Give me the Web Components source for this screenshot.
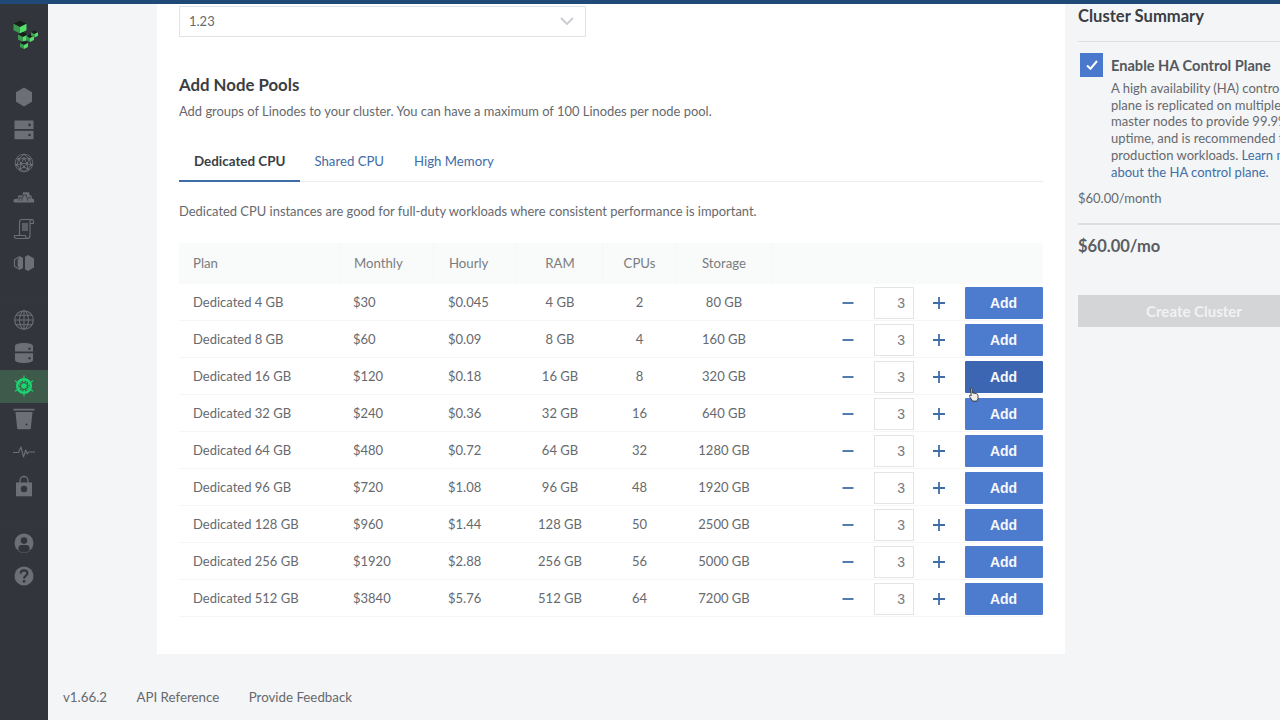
<!DOCTYPE html>
<html lang="en">
<head>
<meta charset="utf-8">
<title>Create Cluster</title>
<style>
  html, body { margin: 0; height: 720px; overflow: hidden; }
  body { background: #f4f5f6; font-family: Lato, "Liberation Sans", sans-serif; color: #66696e; }
</style>
</head>
<body>
<app-shell>
  <app-sidebar slot="side"></app-sidebar>
  <pool-card slot="card"></pool-card>
  <cluster-summary slot="summary"></cluster-summary>
  <app-footer slot="footer"></app-footer>
</app-shell>
<script>
// sidebar icons, all on a 24 box
const ICONS = {
  linodes: '<path fill="currentColor" d="M12 2.500l8 4.700v9.600l-8 4.700-8-4.700V7.200z"/>',
  volumes: '<path fill="currentColor" fill-rule="evenodd" d="M2.500 2.500h19v8.600h-19zM2.500 12.700h19v8.600h-19zM17.500 5.600a1.300 1.300 0 1 0 0 2.600 1.300 1.300 0 0 0 0-2.600zM17.500 15.700a1.300 1.300 0 1 0 0 2.600 1.300 1.300 0 0 0 0-2.600z"/>',
  network: '<g fill="none" stroke="currentColor" stroke-width=".9"><circle cx="12" cy="12" r="8.800"/><path d="M12 3.400L6.500 8 12 7.500 17.500 8zM6.500 8L5 14l4-1.500zM17.500 8L19 14l-4-1.500zM12 7.500L9 12.500h6zM9 12.500L8 18l4 2.600 4-2.600-1-5.500M5 14l3 4M19 14l-3 4M8 18l4-2 4 2M9 12.500l3 3.500 3-3.500"/></g><g fill="currentColor"><circle cx="12" cy="7.500" r="1.300"/><circle cx="9" cy="12.500" r="1.300"/><circle cx="15" cy="12.500" r="1.300"/><circle cx="12" cy="16" r="1.300"/><circle cx="6.500" cy="8" r="1.300"/><circle cx="17.500" cy="8" r="1.300"/><circle cx="5" cy="14" r="1.300"/><circle cx="19" cy="14" r="1.300"/><circle cx="8" cy="18" r="1.300"/><circle cx="16" cy="18" r="1.300"/></g>',
  images: '<path fill="currentColor" d="M2.500 18.500c-1.400-.6-1.400-3 .3-3.400l3-.3.5-3.300h4.200l.5-3.200h6l.8 3.200h1.400l1 3.100 1.900 1v2.900z"/><path fill="none" stroke="#32363c" stroke-width=".8" d="M7 16.800v-3h3v3M11 13.800V11h3.400v2.800M15.600 16.800v-3H19"/>',
  script: '<path fill="none" stroke="currentColor" stroke-width="1.100" stroke-linejoin="round" d="M7.500 18.500V5c0-1.500 1-2.500 2.500-2.500h10c-1.200 0-2 1-2 2.300v13.700c0 1.600-1 3-2.700 3H4.500c-1.500 0-2.400-1.300-2.200-3h11.200c0 1.300.5 2.200 1.600 3M18 6.500h3.500V5c0-1.500-.6-2.500-1.500-2.500"/><path fill="currentColor" d="M10 6h6v8h-6z" opacity=".7"/>',
  balancer: '<path fill="none" stroke="currentColor" stroke-width="1.200" d="M8 5.500L2.500 8.500v7L8 18.500"/><path fill="currentColor" d="M16 4l6 3.400v9.200L16 20l-3-1.700V5.700zM11 6.900v10.200L8 18.800 5.600 15V9L8 5.200z"/>',
  domains: '<g fill="none" stroke="currentColor" stroke-width="1.100"><circle cx="12" cy="12" r="9.300"/><ellipse cx="12" cy="12" rx="4.400" ry="9.300"/><path d="M12 2.700v18.600M2.700 12h18.600M4 7.300h16M4 16.700h16"/></g>',
  databases: '<path fill="currentColor" fill-rule="evenodd" d="M3 5c0-1.900 4-3 9-3s9 1.100 9 3v5.600H3zM3 12.200h18V19c0 1.900-4 3-9 3s-9-1.100-9-3zM17.500 6.600a1.200 1.200 0 1 0 0 2.400 1.200 1.200 0 0 0 0-2.400zM17.500 16a1.200 1.200 0 1 0 0 2.400 1.200 1.200 0 0 0 0-2.400z"/>',
  kube: '<g fill="none" stroke="currentColor"><circle cx="12" cy="12" r="6.800" stroke-width="2.400"/><path stroke-width="1.100" d="M12 1.500v6M12 16.500v6M2.900 6.700l5 3M16.100 14.300l5 3M21.100 6.700l-5 3M7.900 14.300l-5 3"/></g><circle cx="12" cy="12" r="2.800" fill="currentColor"/><circle cx="12" cy="12" r="4.500" fill="none" stroke="currentColor" stroke-width="1.200" stroke-dasharray="1.600 1.200"/>',
  buckets: '<path fill="currentColor" d="M1.500 1.800h21v1.600h-21zM3.500 5h17l-1.700 16.500a1 1 0 0 1-1 .8H6.200a1 1 0 0 1-1-.8z"/><circle cx="14.500" cy="17.500" r="1" fill="#32363c"/>',
  longview: '<path fill="none" stroke="currentColor" stroke-width="1.100" stroke-linejoin="round" d="M1 12.500h5.500L9 7l2.500 10 2.200-7 1.600 4 1.400-2H23"/>',
  marketplace: '<path fill="none" stroke="currentColor" stroke-width="1.300" d="M8 9V6.500a4 4 0 0 1 8 0V9"/><path fill="currentColor" d="M4 8.500h16v13.800H4z"/><circle cx="12" cy="15" r="3.200" fill="#32363c"/>',
  account: '<path fill="currentColor" fill-rule="evenodd" d="M12 2.500a9.500 9.500 0 1 1 0 19 9.500 9.500 0 0 1 0-19zM12 6.300a3.300 3.300 0 1 0 0 6.600 3.300 3.300 0 0 0 0-6.600zM6.500 20.300c1.600 1 3.500 1.500 5.500 1.500s3.900-.5 5.500-1.500v-3.200c0-1.700-1.300-3-3-3h-5c-1.700 0-3 1.300-3 3z"/>',
  help: '<circle cx="12" cy="12" r="9.500" fill="currentColor"/><path fill="none" stroke="#32363c" stroke-width="2.200" d="M8.700 9.500c0-2 1.500-3.200 3.400-3.200s3.300 1.200 3.300 2.900c0 2.700-3.400 2.600-3.400 5.300"/><circle cx="12" cy="17.300" r="1.400" fill="#32363c"/>'
};

// one block of the logo: dark top, mid left face, bright right face
function cube(x, y, s) {
  const p = pts => pts.map(q => q.join(',')).join(' ');
  return `<polygon fill="#15201a" points="${p([[x - s, y - s / 2], [x, y - s], [x + s, y - s / 2], [x, y]])}"/>
    <polygon fill="#3c9a50" points="${p([[x - s, y - s / 2], [x, y], [x, y + s], [x - s, y + s / 2]])}"/>
    <polygon fill="#55e06c" points="${p([[x, y], [x + s, y - s / 2], [x + s, y + s / 2], [x, y + s]])}"/>`;
}

class AppShell extends HTMLElement {
  constructor() {
    super();
    this.attachShadow({ mode: 'open' });
    this.shadowRoot.innerHTML = `
      <style>
        :host { display: flex; height: 720px; width: 1280px; overflow: hidden; position: relative; }
        .main { flex: 1; min-width: 0; display: flex; flex-direction: column; padding-top: 4px; box-sizing: border-box; }
        .cols { display: flex; align-items: flex-start; padding-left: 109px; gap: 13px; }
        .bar { position: absolute; left: 0; top: 0; right: 0; height: 4px; background: #1f4a78; }
      </style>
      <slot name="side"></slot>
      <div class="main">
        <div class="cols">
          <slot name="card"></slot>
          <slot name="summary"></slot>
        </div>
        <slot name="footer"></slot>
      </div>
      <div class="bar"></div>`;
  }
}

class NavItem extends HTMLElement {
  constructor() {
    super();
    this.attachShadow({ mode: 'open' });
  }
  connectedCallback() {
    this.shadowRoot.innerHTML = `
      <style>
        :host { display: flex; align-items: center; justify-content: center; height: 33.200px; color: #6c6f74; }
        :host([active]) { background: #3e5a4a; color: #1bd671; }
      </style>
      <svg width="24" height="24" viewBox="0 0 24 24">${ICONS[this.getAttribute('icon')]}</svg>`;
  }
}

class AppSidebar extends HTMLElement {
  constructor() {
    super();
    this.attachShadow({ mode: 'open' });
    const items = names => names.map(n =>
      `<nav-item icon="${n}"${n === 'kube' ? ' active' : ''}></nav-item>`).join('');
    this.shadowRoot.innerHTML = `
      <style>
        :host { display: flex; flex-direction: column; flex: none; width: 48px; height: 720px; background: #32363c; box-sizing: border-box; padding-top: 4px; }
        .logo { height: 76px; display: flex; justify-content: center; align-items: flex-start; padding-top: 16px; box-sizing: border-box; }
        .group { padding-bottom: 23px; border-bottom: 1px solid #34383e; }
        .three { border: 0; }
      </style>
      <div class="logo">
        <svg width="28" height="30" viewBox="0 0 28 30">
          ${cube(10, 7, 6.500)}${cube(13, 17, 5)}${cube(14, 25, 4)}${cube(20, 18, 4)}${cube(24.500, 14, 3.500)}
        </svg>
      </div>
      <div class="group">${items(['linodes', 'volumes', 'network', 'images', 'script', 'balancer'])}</div>
      <div class="group">${items(['domains', 'databases', 'kube', 'buckets', 'longview', 'marketplace'])}</div>
      <div class="group three">${items(['account', 'help'])}</div>`;
  }
}

class TabStrip extends HTMLElement {
  constructor() {
    super();
    this.attachShadow({ mode: 'open' });
    this.shadowRoot.innerHTML = `
      <style>
        :host { display: flex; height: 41px; box-sizing: border-box; border-bottom: 1px solid #eceded; font-size: 13.200px; }
        div { height: 40px; line-height: 40px; padding: 0 15px; color: #3f6da6; box-sizing: border-box; }
        .on { color: #3a3e43; font-size: 13.400px; font-weight: 700; border-bottom: 2px solid #3e6ca5; height: 41px; margin-bottom: -1px; margin-right: -1px; }
      </style>
      <div class="on">Dedicated CPU</div><div>Shared CPU</div><div>High Memory</div>`;
  }
}

const COLS = 'grid-template-columns: 161px 94px 83px 86px 73px 96px 1fr;';

class PlanRow extends HTMLElement {
  constructor() {
    super();
    this.attachShadow({ mode: 'open' });
  }
  connectedCallback() {
    const [plan, month, hour, ram, cpus, disk] = this.getAttribute('cells').split('|');
    const hot = this.hasAttribute('hover') ? ' hot' : '';
    this.shadowRoot.innerHTML = `
      <style>
        :host { display: grid; ${COLS} height: 37px; align-items: center; border-bottom: 1px solid #f6f6f6; box-sizing: border-box; font-size: 13px; color: #66696e; }
        .l { padding-left: 14px; }
        .m { padding-left: 13px; }
        .c { text-align: center; }
        .qty { display: flex; align-items: center; justify-content: flex-end; height: 32px; margin-top: 1px; }
        .step { width: 20px; height: 20px; display: block; }
        .num { width: 40px; height: 32px; box-sizing: border-box; border: 1px solid #e3e4e6; background: #fff; text-align: right; padding-right: 8px; font: 14px/30px "Liberation Sans", Arial, sans-serif; color: #77797d; margin: 0 15px 0 16px; }
        .add { width: 78px; height: 32px; margin-left: 16px; background: #4d7bce; color: #f6f8fc; font: 700 14px/32px "Liberation Sans", Arial, sans-serif; text-align: center; border-radius: 1px; padding-right: 1px; box-sizing: border-box; }
        .hot { background: #3d66b2; }
      </style>
      <div class="l">${plan}</div>
      <div class="m">${month}</div>
      <div class="l">${hour}</div>
      <div class="c">${ram}</div>
      <div class="c">${cpus}</div>
      <div class="c">${disk}</div>
      <div class="qty">
        <svg class="step" viewBox="0 0 20 20"><path d="M4.500 10h11" stroke="#3f6da6" stroke-width="1.800"/></svg>
        <div class="num">3</div>
        <svg class="step" viewBox="0 0 20 20"><path d="M4 10h12M10 4v12" stroke="#3f6da6" stroke-width="1.800"/></svg>
        <div class="add${hot}">Add</div>
      </div>`;
  }
}

class PlanTable extends HTMLElement {
  constructor() {
    super();
    this.attachShadow({ mode: 'open' });
    const rows = [
      'Dedicated 4 GB|$30|$0.045|4 GB|2|80 GB',
      'Dedicated 8 GB|$60|$0.09|8 GB|4|160 GB',
      'Dedicated 16 GB|$120|$0.18|16 GB|8|320 GB',
      'Dedicated 32 GB|$240|$0.36|32 GB|16|640 GB',
      'Dedicated 64 GB|$480|$0.72|64 GB|32|1280 GB',
      'Dedicated 96 GB|$720|$1.08|96 GB|48|1920 GB',
      'Dedicated 128 GB|$960|$1.44|128 GB|50|2500 GB',
      'Dedicated 256 GB|$1920|$2.88|256 GB|56|5000 GB',
      'Dedicated 512 GB|$3840|$5.76|512 GB|64|7200 GB'
    ];
    this.shadowRoot.innerHTML = `
      <style>
        :host { display: block; }
        .head { display: grid; ${COLS} height: 41px; background: #f9fafa; font-size: 13.200px; color: #7a7d80; }
        .head div { line-height: 41px; padding-left: 14px; border-right: 1px solid #f5f6f6; }
        .head .h { padding-left: 15px; }
        .head .c { text-align: center; padding: 0 0 0 1px; }
        .head div:last-child { border: 0; }
      </style>
      <div class="head">
        <div>Plan</div><div>Monthly</div><div class="h">Hourly</div>
        <div class="c">RAM</div><div class="c">CPUs</div><div class="c">Storage</div><div></div>
      </div>
      ${rows.map((r, i) => `<plan-row cells="${r}"${i === 2 ? ' hover' : ''}></plan-row>`).join('')}`;
  }
}

class PoolCard extends HTMLElement {
  constructor() {
    super();
    this.attachShadow({ mode: 'open' });
    this.shadowRoot.innerHTML = `
      <style>
        :host { display: block; flex: none; width: 908px; box-sizing: border-box; background: #fff; padding: 2px 22px 37px; }
        .select { width: 407px; height: 31px; box-sizing: border-box; border: 1px solid #e1e3e5; padding: 0 11px 2px 9px; display: flex; align-items: center; justify-content: space-between; font-size: 13px; color: #66696e; }
        h2 { margin: 38px 0 0; font-size: 16.800px; line-height: 20px; font-weight: 700; color: #3a3e43; }
        p { margin: 6px 0 0; font-size: 12.930px; line-height: 20px; color: #66696e; }
        tab-strip { margin-top: 20px; }
        p.note { margin-top: 19px; }
        plan-table { margin-top: 22px; }
      </style>
      <div class="select">1.23
        <svg width="14" height="8" viewBox="0 0 14 8"><path d="M1 1l6 6 6-6" fill="none" stroke="#c9cccf" stroke-width="1.800"/></svg>
      </div>
      <h2>Add Node Pools</h2>
      <p>Add groups of Linodes to your cluster. You can have a maximum of 100 Linodes per node pool.</p>
      <tab-strip></tab-strip>
      <p class="note">Dedicated CPU instances are good for full-duty workloads where consistent performance is important.</p>
      <plan-table></plan-table>`;
  }
}

class ClusterSummary extends HTMLElement {
  constructor() {
    super();
    this.attachShadow({ mode: 'open' });
    this.shadowRoot.innerHTML = `
      <style>
        :host { display: block; flex: none; width: 240px; padding-top: 2px; }
        h3 { margin: 0; font-size: 16.600px; line-height: 20px; font-weight: 700; color: #3a3e43; padding-bottom: 15px; border-bottom: 1px solid #dcdedf; }
        .ha { display: flex; margin-top: 11px; }
        .box { flex: none; width: 23px; height: 24px; margin: 0 8px 0 2px; background: #4a78cc; display: flex; align-items: center; justify-content: center; }
        b { display: block; font-size: 14.600px; line-height: 26px; font-weight: 700; color: #54585d; }
        .txt { margin-top: 1px; width: 205px; font-size: 13px; line-height: 16.700px; color: #66696e; }
        a { color: #3f6da6; text-decoration: none; }
        .price { margin-top: 8px; font-size: 13px; line-height: 20px; padding-bottom: 15px; border-bottom: 2px solid #dcdedf; }
        .total { font-size: 16.500px; line-height: 20px; font-weight: 700; color: #5a5e63; margin-top: 11px; }
        .create { margin-top: 39px; height: 32px; line-height: 32px; background: #d3d5d6; color: #f1f2f2; font-size: 15px; font-weight: 700; text-align: center; width: 232px; }
      </style>
      <h3>Cluster Summary</h3>
      <div class="ha">
        <div class="box"><svg width="14" height="12" viewBox="0 0 14 12"><path d="M2 6.500l3.500 3.200L12 2" fill="none" stroke="#fff" stroke-width="2"/></svg></div>
        <div>
          <b>Enable HA Control Plane</b>
          <div class="txt">A high availability (HA) control plane is replicated on multiple master nodes to provide 99.9% uptime, and is recommended for production workloads. <a>Learn more about the HA control plane.</a></div>
        </div>
      </div>
      <div class="price">$60.00/month</div>
      <div class="total">$60.00/mo</div>
      <div class="create">Create Cluster</div>`;
  }
}

class AppFooter extends HTMLElement {
  constructor() {
    super();
    this.attachShadow({ mode: 'open' });
    this.shadowRoot.innerHTML = `
      <style>
        :host { display: flex; gap: 29.500px; padding: 33px 0 0 15px; font-size: 13.300px; line-height: 20px; color: #66696e; }
      </style>
      <span>v1.66.2</span><span>API Reference</span><span>Provide Feedback</span>`;
  }
}

class HandCursor extends HTMLElement {
  constructor() {
    super();
    this.attachShadow({ mode: 'open' });
    this.shadowRoot.innerHTML = `
      <style>:host { position: fixed; left: 968px; top: 386px; display: block; width: 12px; height: 15px; }</style>
      <svg width="12" height="15" viewBox="0 0 12 15"><path d="M2.500 1.500c.8-.8 1.700 0 1.700.8v3.500l4 .8c1.200.3 1.800 1 1.800 2v3l-1 2.500H4.500L1.500 9.500c-.5-1 .5-1.700 1.200-1.200l.5.5z" fill="#f3efe8" stroke="#2d3136" stroke-width=".9"/></svg>`;
  }
}

customElements.define('nav-item', NavItem);
customElements.define('app-sidebar', AppSidebar);
customElements.define('tab-strip', TabStrip);
customElements.define('plan-row', PlanRow);
customElements.define('plan-table', PlanTable);
customElements.define('pool-card', PoolCard);
customElements.define('cluster-summary', ClusterSummary);
customElements.define('app-footer', AppFooter);
customElements.define('hand-cursor', HandCursor);
customElements.define('app-shell', AppShell);
document.body.appendChild(document.createElement('hand-cursor'));
</script>
</body>
</html>
